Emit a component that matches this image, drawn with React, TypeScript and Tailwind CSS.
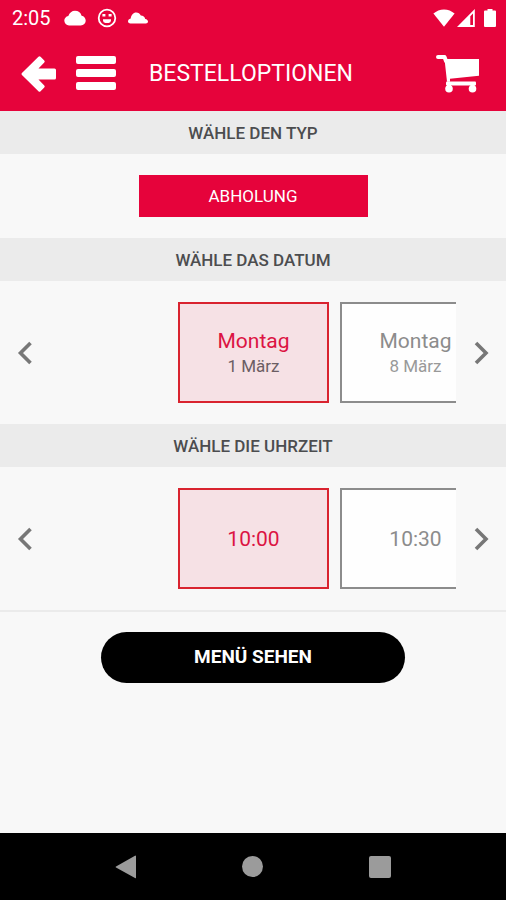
import { useState } from 'react';
import type { ReactNode } from 'react';

type Option = { id: string; title: string; subtitle?: string };

const dates: Option[] = [
    { id: 'd1', title: 'Montag', subtitle: '1 März' },
    { id: 'd8', title: 'Montag', subtitle: '8 März' },
];

const times: Option[] = [
    { id: 't1000', title: '10:00' },
    { id: 't1030', title: '10:30' },
];

const StatusBar = () => (
    <div className="flex h-9 items-center justify-between pl-3 pr-2.5 text-white">
        <div className="flex items-center">
            <span className="w-[52px] text-[20px] leading-6">2:05</span>
            {/* Notification icons */}
            <svg width="22" height="16" viewBox="0 0 22 16" fill="currentColor" aria-hidden="true">
                <path d="M5 15.400A4.800 4.800 0 0 1 .3 10.600c0-2.400 1.600-4.200 4-4.700C5.500 2.800 7.900.8 11 .8c3.300 0 5.700 1.900 6.600 4.900 2.500.4 4.100 2.500 4.100 4.900 0 2.800-2.100 4.800-4.900 4.800z" />
            </svg>
            <svg className="ml-[11px]" width="20" height="20" viewBox="0 0 20 20" fill="none" stroke="currentColor" strokeWidth="1.8" aria-hidden="true">
                <circle cx="10" cy="10" r="8.300" />
                <path d="M5.400 7.300h3M11.600 7.300h3" strokeWidth="2.400" />
                <path d="M6 11.200h8v1.400a2.400 2.400 0 0 1-2.400 2.400H8.400A2.400 2.400 0 0 1 6 12.600z" fill="currentColor" stroke="none" />
            </svg>
            <svg className="ml-[11px]" width="20" height="12" viewBox="0 0 20 12" fill="currentColor" aria-hidden="true">
                <path d="M2.400 11.400C.9 11.400 0 10.600 0 9.300c0-1.400 1-2.500 2.700-2.900C3.400 3 5.200.6 8.200.6c2.100 0 3.700 1.100 4.600 2.900 2.400 0 4 1.300 4.400 3.400 1.800.3 2.800 1.300 2.800 2.500s-.9 2-2.200 2z" />
            </svg>
        </div>
        <div className="flex items-center">
            <svg width="22" height="18" viewBox="0 0 22 18" fill="currentColor" aria-hidden="true">
                <path d="M11 17.800.4 4.600C3.300 1.900 7 .4 11 .4s7.700 1.500 10.600 4.200z" />
            </svg>
            <svg className="ml-0.5" width="18" height="18" viewBox="0 0 18 18" fill="currentColor" aria-hidden="true">
                <path fillRule="evenodd" d="M17.800 0v18H0zM13.300 7.200v8.800h2.700V4.500z" />
            </svg>
            <svg className="ml-[9px]" width="12" height="18" viewBox="0 0 12 18" fill="currentColor" aria-hidden="true">
                <path d="M3.500 0h5v1.600H11a1 1 0 0 1 1 1V17a1 1 0 0 1-1 1H1a1 1 0 0 1-1-1V2.600a1 1 0 0 1 1-1h2.500z" />
            </svg>
        </div>
    </div>
);

const Header = () => (
    <header className="bg-[#e6033b] text-white">
        <StatusBar />
        <div className="flex h-[75px] items-center pl-5 pr-[26px]">
            <button type="button" aria-label="Zurück">
                <svg width="38" height="38" viewBox="0 0 38 38" fill="currentColor" stroke="currentColor" strokeLinejoin="round" aria-hidden="true">
                    <path d="M3 19 19.500 2.800 23.200 6.500 15 15h19.500v8H15l8.200 8.500-3.700 3.700z" strokeWidth="3" />
                </svg>
            </button>
            <button type="button" aria-label="Menü" className="ml-[18px]">
                <svg width="40" height="36" viewBox="0 0 40 36" fill="currentColor" aria-hidden="true">
                    <rect y="0" width="40" height="8" rx="2" />
                    <rect y="13" width="40" height="8" rx="2" />
                    <rect y="26" width="40" height="8" rx="2" />
                </svg>
            </button>
            <h1 className="ml-[33px] grow text-[23px] leading-8">BESTELLOPTIONEN</h1>
            <button type="button" aria-label="Warenkorb">
                <svg width="44" height="38" viewBox="0 0 44 38" fill="none" stroke="currentColor" aria-hidden="true">
                    <path d="M2 2h6.500l1.500 4" strokeWidth="4" strokeLinecap="round" strokeLinejoin="round" />
                    <path d="M8.500 4H43v16.800L14 23.800v3H11z" fill="currentColor" stroke="none" />
                    <path d="M11 27.500h28v2H11z" strokeWidth="2" strokeLinejoin="round" fill="currentColor" />
                    <path d="M13 29v4M36.500 29v4" strokeWidth="4" />
                    <circle cx="13" cy="33.800" r="3.800" fill="currentColor" stroke="none" />
                    <circle cx="36.500" cy="33.800" r="3.800" fill="currentColor" stroke="none" />
                </svg>
            </button>
        </div>
    </header>
);

const Section = ({ title, children }: { title: string; children: ReactNode }) => (
    <section>
        <h2 className="bg-[#ebebeb] pt-0.5 text-center text-[17px] font-medium leading-[41px] text-[#4c4d4f]">{title}</h2>
        <div className="py-[21px]">{children}</div>
    </section>
);

const Chevron = ({ d }: { d: string }) => (
    <svg width="16" height="24" viewBox="0 0 16 24" fill="none" stroke="currentColor" strokeWidth="3.600" aria-hidden="true">
        <path d={d} />
    </svg>
);

const OptionSlider = ({ label, options }: { label: string; options: Option[] }) => {
    const [selected, setSelected] = useState(options[0].id);

    const move = (step: number) => {
        const next = options[options.findIndex((o) => o.id === selected) + step];
        if (next) setSelected(next.id);
    };

    return (
        <div className="flex text-[#777]">
            <button type="button" aria-label={`${label} zurück`} className="flex w-[50px] shrink-0 items-center justify-center" onClick={() => move(-1)}>
                <Chevron d="M13.500 2 3.500 12l10 10" />
            </button>
            <div className="flex min-w-0 grow gap-[11px] overflow-hidden pl-32">
                {options.map((option) => {
                    const active = option.id === selected;
                    return (
                        <button
                            key={option.id}
                            type="button"
                            aria-pressed={active}
                            onClick={() => setSelected(option.id)}
                            className={`flex h-[101px] w-[151px] shrink-0 flex-col items-center justify-center border-2 ${
                                active ? 'border-[#d9232f] bg-[#f6e1e5]' : 'border-[#8c8c8c] bg-[#fefefe]'
                            }`}
                        >
                            <span className={`text-[21px] leading-[26px] ${active ? 'text-[#dc1443]' : 'text-[#8c8c8c]'}`}>
                                {option.title}
                            </span>
                            {option.subtitle && (
                                <span className={`text-[17px] leading-6 ${active ? 'text-[#6b5d63]' : 'text-[#999]'}`}>
                                    {option.subtitle}
                                </span>
                            )}
                        </button>
                    );
                })}
            </div>
            <button type="button" aria-label={`${label} weiter`} className="flex w-[50px] shrink-0 items-center justify-center" onClick={() => move(1)}>
                <Chevron d="m3 2 10 10L3 22" />
            </button>
        </div>
    );
};

const NavBar = () => (
    <nav className="flex h-[67px] items-center justify-around bg-black px-[62px] text-[#9b9b9b]">
        <button type="button" aria-label="Zurück">
            <svg width="22" height="24" viewBox="0 0 22 24" fill="currentColor" aria-hidden="true">
                <path d="M21 1.200v21.600a.6.6 0 0 1-1 .3L1 12.600a.7.7 0 0 1 0-1.200L20 .7a.7.7 0 0 1 1 .5z" />
            </svg>
        </button>
        <button type="button" aria-label="Startseite" className="size-[21px] rounded-full bg-current" />
        <button type="button" aria-label="Übersicht" className="size-[22px] rounded-xs bg-current" />
    </nav>
);

const App = () => (
    <div className="flex min-h-screen flex-col bg-[#f8f8f8] font-['Roboto',sans-serif]">
        <Header />
        <main className="grow">
            <Section title="WÄHLE DEN TYP">
                <button type="button" className="mx-auto block h-[42px] w-[229px] bg-[#e6033b] pt-0.5 text-[17px] text-white">
                    ABHOLUNG
                </button>
            </Section>
            <Section title="WÄHLE DAS DATUM">
                <OptionSlider label="Datum" options={dates} />
            </Section>
            <Section title="WÄHLE DIE UHRZEIT">
                <OptionSlider label="Uhrzeit" options={times} />
            </Section>
            <div className="border-t-2 border-[#ebebeb] pt-5">
                <button type="button" className="mx-auto block h-[51px] w-3/5 rounded-full bg-black text-[19px] font-bold text-white">
                    MENÜ SEHEN
                </button>
            </div>
        </main>
        <NavBar />
    </div>
);

export default App;
